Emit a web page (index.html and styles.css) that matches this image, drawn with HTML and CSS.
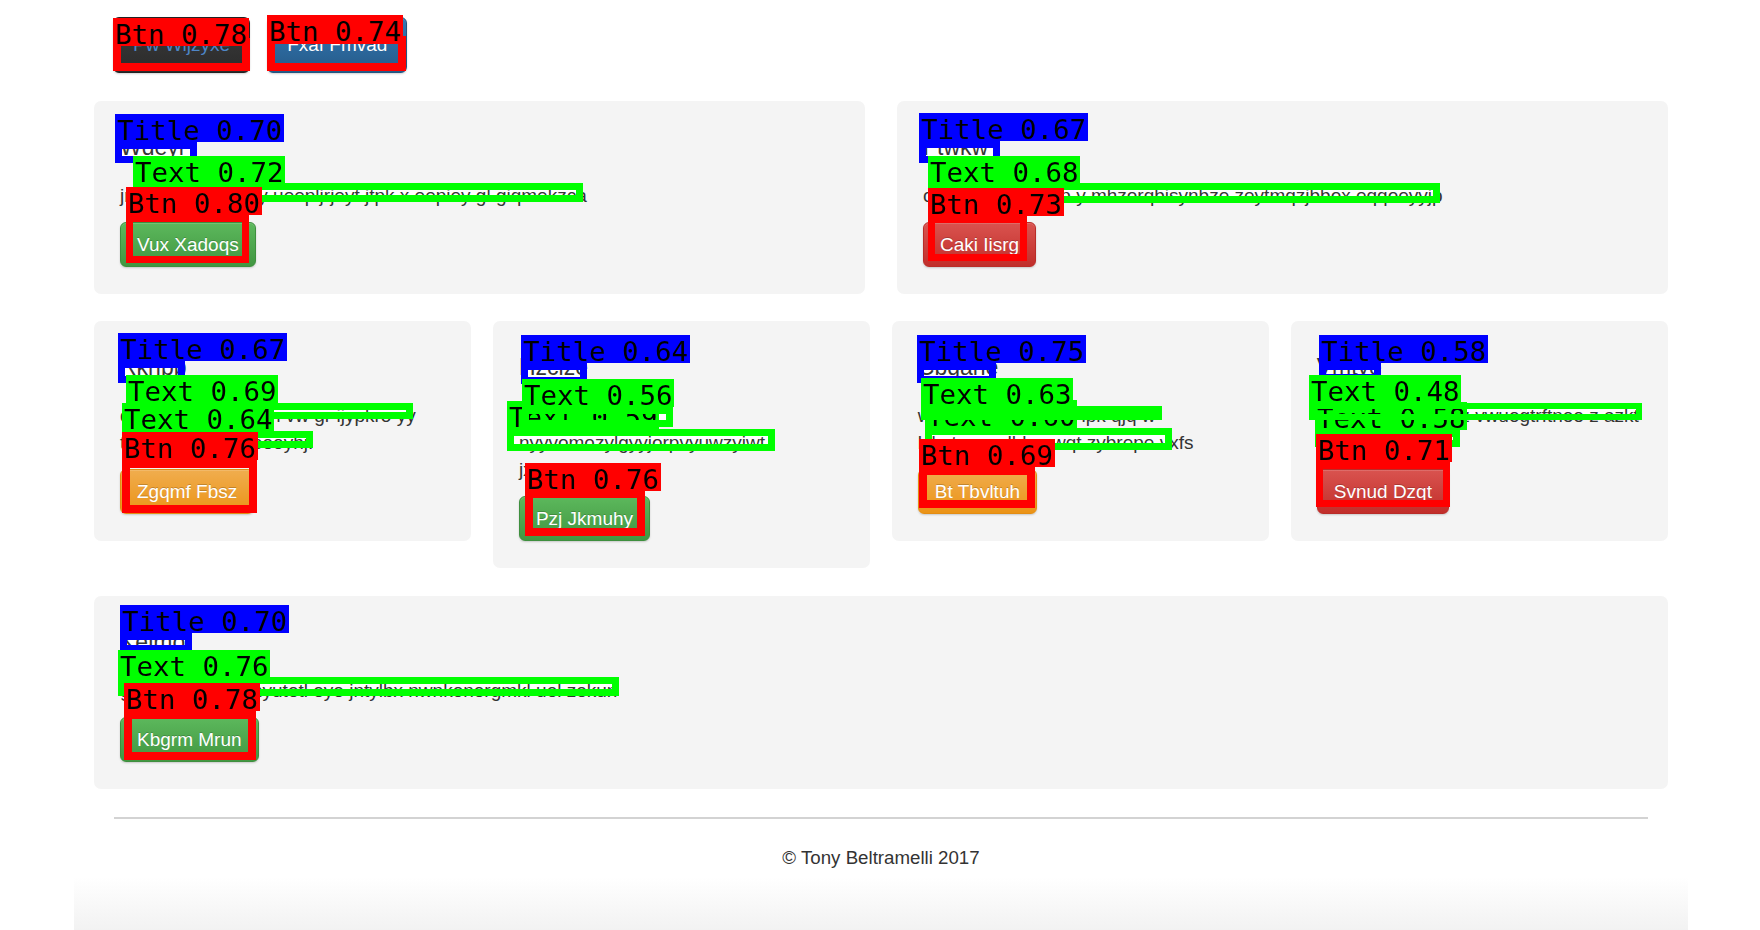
FILE: index.html
```html
<!DOCTYPE html>
<html lang="en">
<head>
<meta charset="utf-8">
<title>pix2code detections</title>
<link rel="stylesheet" href="styles.css">
</head>
<body>
<div class="page">
  <header class="topbar">
    <a class="btn btn-dark">Pw Wljzyxe</a>
    <a class="btn btn-primary">Fxaf Fmvad</a>
  </header>

  <section class="grid grid-2">
    <div class="well">
      <h4>Wdeyr</h4>
      <p>jmcvqkyhwzbk ay ueepljrjeyt jtpk x eepiey gl giqmekzca</p>
      <a class="btn btn-success">Vux Xadoqs</a>
    </div>
    <div class="well">
      <h4>Ftwkw</h4>
      <p>cgvbtw qnfhxbkrp y mhzorqbisynbze zeytmqzjbbox eqqoeyyjp</p>
      <a class="btn btn-danger">Caki Iisrg</a>
    </div>
  </section>

  <section class="grid grid-4">
    <div class="well">
      <h4>Rknpp</h4>
      <p>dkjfl oyqtzw hxbnm vw gr ijypkro yy<br>tbnwu qxmzrkv eeoyhj.</p>
      <a class="btn btn-warning">Zgqmf Fbsz</a>
    </div>
    <div class="well">
      <h4>Hzcize</h4>
      <p>vhqnzt kpxrsg<br>nyyvomozylgyyjorpvyuwzyiwt<br>jxbtq fzkr</p>
      <a class="btn btn-success">Pzj Jkmuhy</a>
    </div>
    <div class="well">
      <h4>Cbgane</h4>
      <p>wkxtnq gpvrhd ozb ipk qjq w<br>lxbvtcmw dhkyqwqt zybrepe vxfs</p>
      <a class="btn btn-warning">Bt Tbvltuh</a>
    </div>
    <div class="well">
      <h4>Vmtye</h4>
      <p>vkbpq hmzxd qhtz vwuogtrftnee z azkt<br>qhzcwmrbt j</p>
      <a class="btn btn-danger">Svnud Dzqt</a>
    </div>
  </section>

  <section class="grid grid-1">
    <div class="well">
      <h4>Kelmo</h4>
      <p>gqkvjrm wdhxp nyutetl eye jntylbx nwnkonergmkl uel zekun</p>
      <a class="btn btn-success">Kbgrm Mrun</a>
    </div>
  </section>

  <hr class="rule">
  <footer class="footer">
    <p>&copy; Tony Beltramelli 2017</p>
  </footer>
  <div class="fade"></div>
</div>

<div class="overlay">
  <div class="det red b8" style="left:113px;top:38px;width:137px;height:33px"></div>
  <div class="tag red" style="left:113px;top:18px">Btn 0.78</div>
  <div class="det red b8" style="left:267px;top:36px;width:139px;height:35px"></div>
  <div class="tag red" style="left:267px;top:15px">Btn 0.74</div>

  <div class="det blue" style="left:115px;top:142px;width:82px;height:21px"></div>
  <div class="tag blue" style="left:115px;top:114px">Title 0.70</div>
  <div class="det green" style="left:133px;top:183px;width:450px;height:19px"></div>
  <div class="tag green" style="left:133px;top:156px">Text 0.72</div>
  <div class="det red" style="left:126px;top:215px;width:123px;height:48px"></div>
  <div class="tag red" style="left:126px;top:187px">Btn 0.80</div>

  <div class="det blue" style="left:919px;top:141px;width:81px;height:22px"></div>
  <div class="tag blue" style="left:919px;top:113px">Title 0.67</div>
  <div class="det green" style="left:928px;top:183px;width:512px;height:20px"></div>
  <div class="tag green" style="left:928px;top:156px">Text 0.68</div>
  <div class="det red" style="left:928px;top:216px;width:99px;height:45px"></div>
  <div class="tag red" style="left:928px;top:188px">Btn 0.73</div>

  <div class="det blue" style="left:118px;top:361px;width:67px;height:22px"></div>
  <div class="tag blue" style="left:118px;top:333px">Title 0.67</div>
  <div class="det green" style="left:126px;top:403px;width:287px;height:16px"></div>
  <div class="tag green" style="left:126px;top:375px">Text 0.69</div>
  <div class="det green" style="left:122px;top:431px;width:191px;height:17px"></div>
  <div class="tag green" style="left:122px;top:403px">Text 0.64</div>
  <div class="det red b8" style="left:122px;top:460px;width:135px;height:53px"></div>
  <div class="tag red" style="left:122px;top:432px">Btn 0.76</div>

  <div class="det blue" style="left:521px;top:363px;width:66px;height:21px"></div>
  <div class="tag blue" style="left:521px;top:335px">Title 0.64</div>
  <div class="det green" style="left:507px;top:429px;width:268px;height:22px"></div>
  <div class="tag green" style="left:507px;top:401px">Text 0.59</div>
  <div class="det green" style="left:522px;top:407px;width:151px;height:20px"></div>
  <div class="tag green" style="left:522px;top:379px">Text 0.56</div>
  <div class="det red b8" style="left:525px;top:490px;width:120px;height:46px"></div>
  <div class="tag red" style="left:525px;top:463px">Btn 0.76</div>

  <div class="det blue" style="left:917px;top:363px;width:79px;height:20px"></div>
  <div class="tag blue" style="left:917px;top:335px">Title 0.75</div>
  <div class="det green" style="left:925px;top:428px;width:247px;height:22px"></div>
  <div class="tag green" style="left:925px;top:400px">Text 0.60</div>
  <div class="det green" style="left:921px;top:406px;width:241px;height:14px"></div>
  <div class="tag green" style="left:921px;top:378px">Text 0.63</div>
  <div class="det red b8" style="left:919px;top:467px;width:116px;height:41px"></div>
  <div class="tag red" style="left:919px;top:439px">Btn 0.69</div>

  <div class="det blue" style="left:1319px;top:363px;width:62px;height:18px"></div>
  <div class="tag blue" style="left:1319px;top:335px">Title 0.58</div>
  <div class="det green" style="left:1315px;top:430px;width:145px;height:17px"></div>
  <div class="tag green" style="left:1315px;top:402px">Text 0.58</div>
  <div class="det green b6" style="left:1309px;top:403px;width:333px;height:17px"></div>
  <div class="tag green" style="left:1309px;top:375px">Text 0.48</div>
  <div class="det red" style="left:1316px;top:462px;width:134px;height:45px"></div>
  <div class="tag red" style="left:1316px;top:434px">Btn 0.71</div>

  <div class="det blue" style="left:120px;top:633px;width:72px;height:19px"></div>
  <div class="tag blue" style="left:120px;top:605px">Title 0.70</div>
  <div class="det green" style="left:118px;top:677px;width:501px;height:19px"></div>
  <div class="tag green" style="left:118px;top:650px">Text 0.76</div>
  <div class="det red b8" style="left:124px;top:711px;width:132px;height:49px"></div>
  <div class="tag red" style="left:124px;top:683px">Btn 0.78</div>
</div>
</body>
</html>
```

FILE: styles.css
```css
html, body {
  margin: 0;
  padding: 0;
}

body {
  width: 1760px;
  height: 930px;
  overflow: hidden;
  position: relative;
  background: #ffffff;
  color: #333333;
  font-family: "Liberation Sans", Arial, sans-serif;
}

.page {
  margin-left: 94px;
  width: 1574px;
  padding-top: 17px;
}

/* header buttons */
.topbar {
  display: flex;
  gap: 17px;
  padding-left: 19px;
}

.btn {
  display: inline-block;
  box-sizing: border-box;
  height: 45px;
  line-height: 43px;
  padding: 0 16px;
  border: 1px solid transparent;
  border-radius: 6px;
  font-size: 19px;
  color: #ffffff;
  text-decoration: none;
  white-space: nowrap;
  text-shadow: 0 -1px 0 rgba(0, 0, 0, 0.2);
  box-shadow: inset 0 1px 0 rgba(255, 255, 255, 0.15), 0 1px 2px rgba(0, 0, 0, 0.18);
}

.topbar .btn {
  height: 56px;
  line-height: 54px;
  padding: 0 19px;
}

.btn-dark {
  background: linear-gradient(#3c3c3c, #2b2b2b);
  border-color: #222222;
  color: #4f86c6;
}

.btn-primary {
  background: linear-gradient(#337ab7, #265a88);
  border-color: #245580;
}

.btn-success {
  background: linear-gradient(#5cb85c, #419641);
  border-color: #3e8f3e;
}

.btn-danger {
  background: linear-gradient(#d9534f, #c12e2a);
  border-color: #b92c28;
}

.btn-warning {
  background: linear-gradient(#f0ad4e, #eb9316);
  border-color: #e38d13;
}

/* rows of wells */
.grid {
  display: grid;
  align-items: start;
}

.grid-2 {
  grid-template-columns: 1fr 1fr;
  column-gap: 32px;
  margin-top: 28px;
}

.grid-4 {
  grid-template-columns: repeat(4, 1fr);
  column-gap: 21.67px;
  margin-top: 27px;
}

.grid-1 {
  grid-template-columns: 1fr;
  margin-top: 28px;
}

.well {
  background: #f4f4f4;
  border-radius: 7px;
  padding: 32px 26px 27px;
  display: flex;
  flex-direction: column;
  align-items: flex-start;
}

.well h4 {
  margin: 0 0 21px;
  font-size: 23px;
  line-height: 28px;
  font-weight: normal;
  color: #333333;
}

.well p {
  margin: 0 0 13px;
  font-size: 19px;
  line-height: 27px;
  white-space: nowrap;
}

/* footer */
.rule {
  margin: 28px 20px 0;
  border: 0;
  border-top: 2px solid #d3d3d3;
  height: 0;
}

.footer p {
  margin: 25px 0 0;
  text-align: center;
  font-size: 18.7px;
  line-height: 27px;
  color: #333333;
}

.fade {
  margin: 6px -20px 0;
  height: 70px;
  background: linear-gradient(#ffffff, #eeeeee);
}

/* detection overlay */
.overlay {
  position: absolute;
  left: 0;
  top: 0;
  width: 1760px;
  height: 930px;
  pointer-events: none;
}

.det {
  position: absolute;
  box-sizing: border-box;
  border: 7px solid;
}

.det.b8 {
  border-width: 8px;
}

.det.b6 {
  border-width: 6px;
}

.det.red { border-color: #ff0000; }
.det.green { border-color: #00ff00; }
.det.blue { border-color: #0000ff; }

/* text and title boxes show the page beneath brightened to white */
.det.green,
.det.blue {
  -webkit-backdrop-filter: brightness(1.05);
  backdrop-filter: brightness(1.05);
}

.tag {
  position: absolute;
  height: 28px;
  padding: 0 2px;
  font-family: "DejaVu Sans Mono", monospace;
  font-size: 27.4px;
  line-height: 34px;
  color: #000000;
  white-space: nowrap;
}

.tag.red { background: #ff0000; }
.tag.green { background: #00ff00; }
.tag.blue { background: #0000ff; }
```
